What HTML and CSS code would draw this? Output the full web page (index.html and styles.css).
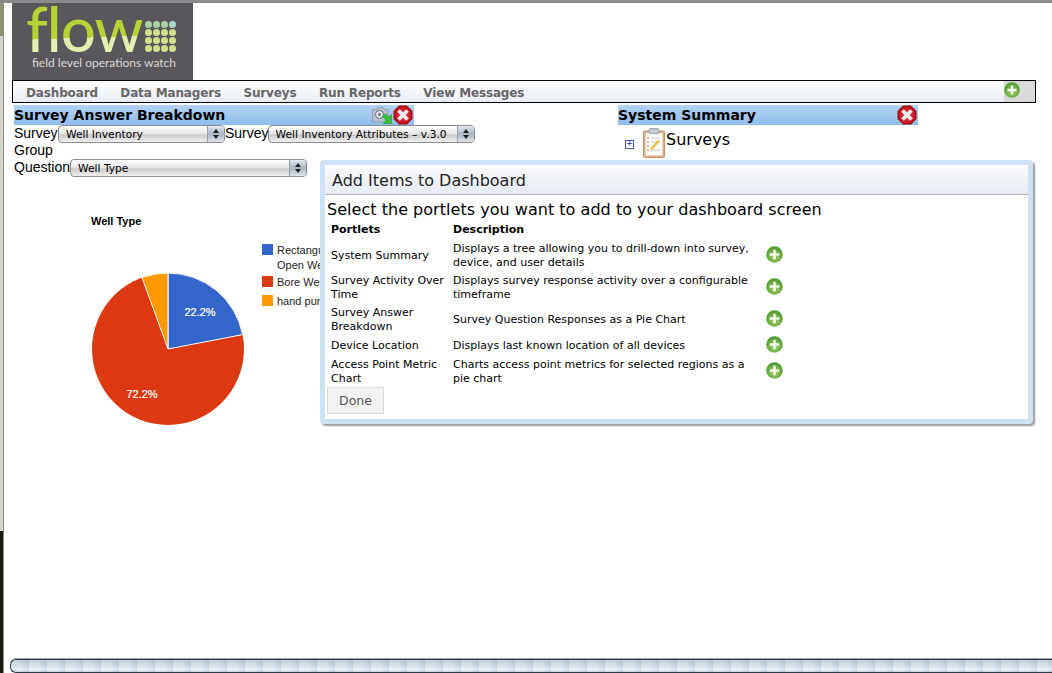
FILE: index.html
```html
<!DOCTYPE html>
<html lang="en">
<head>
    <meta charset="UTF-8">
    <title>FLOW Dashboard</title>
    <link rel="stylesheet" href="styles.css">
</head>
<body>

<svg class="iconDefs" width="0" height="0">
    <defs>
        <radialGradient id="greenBall" cx="50%" cy="62%" r="60%">
            <stop offset="0" stop-color="#a9d672"/>
            <stop offset="1" stop-color="#4b952a"/>
        </radialGradient>
        <radialGradient id="redBall" cx="50%" cy="50%" r="58%">
            <stop offset="0" stop-color="#ea4b50"/>
            <stop offset="0.7" stop-color="#c4151f"/>
            <stop offset="1" stop-color="#7c070d"/>
        </radialGradient>
        <symbol id="addIcon" viewBox="0 0 16 16">
            <circle cx="8" cy="8" r="7.8" fill="url(#greenBall)"/>
            <path d="M8 3.500v9M3.500 8h9" stroke="#f4f8ee" stroke-width="2.400"/>
        </symbol>
        <symbol id="closeIcon" viewBox="0 0 20 20">
            <path d="M6 0.500h8l5.500 5.500v8L14 19.500H6L0.500 14V6z" fill="url(#redBall)"/>
            <path d="M5.500 5.500l9 9M14.500 5.500l-9 9" stroke="#f6f0f0" stroke-width="3.800"/>
        </symbol>
    </defs>
</svg>

<div class="page">
    <div class="logo">
        <div class="logoMark">
            <span class="logoWord">flow</span>
            <div class="logoDots">
                <i class="top"></i><i class="top"></i><i class="top"></i><i class="teal"></i>
                <i></i><i></i><i></i><i></i>
                <i></i><i></i><i></i><i></i>
                <i></i><i></i><i></i><i></i>
            </div>
        </div>
        <div class="logoTag">field level operations watch</div>
    </div>

    <div class="menu">
        <div class="menuItems">
            <span>Dashboard</span>
            <span>Data Managers</span>
            <span>Surveys</span>
            <span>Run Reports</span>
            <span>View Messages</span>
        </div>
        <div class="menuAdd"><svg class="addSmall"><use href="#addIcon"/></svg></div>
    </div>

    <div class="portlets">
        <section class="portlet breakdown">
            <div class="portletHead">
                <span>Survey Answer Breakdown</span>
                <svg class="exportIcon" viewBox="0 0 20 18">
                    <path d="M0.500 3.500h4l1-2h6l1 2h3.500v12.500H0.500z" fill="#b6c2d3" stroke="#8b95a3" stroke-width="0.800"/>
                    <circle cx="7.500" cy="8.500" r="4" fill="#eef1f5" stroke="#59626d"/>
                    <circle cx="7.500" cy="8.500" r="1.700" fill="#7f8a9a"/>
                    <path d="M19.500 17.500v-9l-2.600 2.600-3.400-3.400-3 3 3.400 3.400-2.600 3.400z" fill="#35c035" stroke="#1f8a24" stroke-width="0.500"/>
                </svg>
                <svg class="closeBtn"><use href="#closeIcon"/></svg>
            </div>
            <div class="filters">
                <label class="groupLabel">Survey Group</label>
                <div class="fakeSelect surveyGroup"><span>Well Inventory</span><b></b></div>
                <label>Survey</label>
                <div class="fakeSelect surveyPick"><span>Well Inventory Attributes – v.3.0</span><b></b></div>
            </div>
            <div class="filters">
                <label>Question</label>
                <div class="fakeSelect questionPick"><span>Well Type</span><b></b></div>
            </div>
            <div class="chart">
                <div class="chartTitle">Well Type</div>
                <div class="chartBody">
                    <svg class="pie" width="154" height="154" viewBox="-77 -77 154 154">
                        <circle r="76" fill="#dc3912"/>
                        <path d="M0 0V-76A76 76 0 0 1 74.600 -14.400Z" fill="#3366cc" stroke="#fff"/>
                        <path d="M0 0L-26 -71.400A76 76 0 0 1 0 -76Z" fill="#ff9900" stroke="#fff"/>
                        <text x="32" y="-33" class="pieLabel" text-anchor="middle">22.2%</text>
                        <text x="-26" y="49" class="pieLabel" text-anchor="middle">72.2%</text>
                    </svg>
                    <ul class="legend">
                        <li><i class="blue"></i><span>Rectangular<br>Open Well</span></li>
                        <li><i class="red"></i><span>Bore Well</span></li>
                        <li><i class="orange"></i><span>hand pump</span></li>
                    </ul>
                </div>
            </div>
        </section>

        <section class="portlet summary">
            <div class="portletHead">
                <span>System Summary</span>
                <svg class="closeBtn"><use href="#closeIcon"/></svg>
            </div>
            <div class="treeRow">
                <span class="treeToggle">+</span>
                <svg class="clipboard" viewBox="0 0 22 30">
                    <rect x="0.500" y="3" width="21" height="26.500" rx="1" fill="#dfae86" stroke="#c39670"/>
                    <rect x="2.500" y="5" width="17" height="22.500" fill="#fafaf6"/>
                    <rect x="6" y="0.500" width="10" height="5" rx="1" fill="#c4c9cf" stroke="#8f959c" stroke-width="0.700"/>
                    <path d="M4 10h2M4 14h2M4 18h2M4 22h2" stroke="#e0685e" stroke-width="1.200"/>
                    <path d="M8 10h9M8 14h9M8 22h9" stroke="#cdd1d6"/>
                    <path d="M7 21l8-9 1.500 1.500-8 9z" fill="#eab92d"/>
                </svg>
                <span class="treeLabel">Surveys</span>
            </div>
        </section>
    </div>

    <div class="dialog">
        <div class="dialogHead">Add Items to Dashboard</div>
        <div class="dialogBody">
            <div class="dialogLead">Select the portlets you want to add to your dashboard screen</div>
            <table class="portletTable">
                <tr><th>Portlets</th><th>Description</th><th></th></tr>
                <tr>
                    <td class="nameCol">System Summary</td>
                    <td class="descCol">Displays a tree allowing you to drill-down into survey, device, and user details</td>
                    <td class="addCol"><svg class="addBig"><use href="#addIcon"/></svg></td>
                </tr>
                <tr>
                    <td class="nameCol">Survey Activity Over Time</td>
                    <td class="descCol">Displays survey response activity over a configurable timeframe</td>
                    <td class="addCol"><svg class="addBig"><use href="#addIcon"/></svg></td>
                </tr>
                <tr>
                    <td class="nameCol">Survey Answer Breakdown</td>
                    <td class="descCol">Survey Question Responses as a Pie Chart</td>
                    <td class="addCol"><svg class="addBig"><use href="#addIcon"/></svg></td>
                </tr>
                <tr>
                    <td class="nameCol">Device Location</td>
                    <td class="descCol">Displays last known location of all devices</td>
                    <td class="addCol"><svg class="addBig"><use href="#addIcon"/></svg></td>
                </tr>
                <tr>
                    <td class="nameCol">Access Point Metric Chart</td>
                    <td class="descCol">Charts access point metrics for selected regions as a pie chart</td>
                    <td class="addCol"><svg class="addBig"><use href="#addIcon"/></svg></td>
                </tr>
            </table>
            <button class="doneBtn">Done</button>
        </div>
    </div>

    <div class="hScroll"></div>
</div>

</body>
</html>
```

FILE: styles.css
```css
html, body {
    margin: 0;
    padding: 0;
    height: 100%;
    overflow: hidden;
    background-color: #fff;
    color: #000;
    font-family: "DejaVu Sans", Verdana, sans-serif;
}

.iconDefs {
    position: absolute;
}

/* Page frame, window chrome shows on top and left */
.page {
    position: relative;
    box-sizing: border-box;
    height: 673px;
    padding: 0 16px 0 12px;
    border-top: 3px solid #8b8b8b;
    display: flex;
    flex-direction: column;
}

.page::before {
    content: "";
    position: absolute;
    left: 0;
    top: 0;
    bottom: 0;
    width: 3px;
    border-right: 1px solid #8d8d86;
    background: linear-gradient(180deg, #8f9270 0 33px, #d5d5cb 33px 528px, #141c12 528px);
}

/* Logo */
.logo {
    width: 181px;
    height: 77px;
    box-sizing: border-box;
    padding-left: 14px;
    background-color: #59575c;
    flex: none;
}

.logoMark {
    display: flex;
    align-items: flex-end;
    height: 50px;
}

.logoWord {
    font-family: "Lato", sans-serif;
    font-size: 62px;
    font-weight: 500;
    line-height: 50px;
    letter-spacing: -1px;
    background: linear-gradient(178deg, #b5d334 0 68%, #e3efae 68%);
    -webkit-background-clip: text;
    background-clip: text;
    color: transparent;
}

.logoDots {
    display: grid;
    grid-template-columns: repeat(4, 7px);
    gap: 1px;
    margin: 0 0 1px 3px;
}

.logoDots i {
    width: 7px;
    height: 7px;
    border-radius: 50%;
    background-color: #cfe08d;
}

.logoDots i.top {
    background-color: #a9cfa5;
}

.logoDots i.teal {
    background-color: #a6dcc8;
}

.logoTag {
    margin: 2px 0 0 6px;
    font-family: "Lato", sans-serif;
    font-size: 12px;
    color: #d9d9d5;
    white-space: nowrap;
}

/* Menu bar */
.menu {
    flex: none;
    width: 1024px;
    height: 23px;
    box-sizing: border-box;
    border: 1px solid #000;
    display: flex;
    justify-content: space-between;
    background: linear-gradient(180deg, #fff, #e9edf6);
}

.menuItems {
    display: flex;
    gap: 22.5px;
    padding: 5px 0 0 13px;
    font-size: 12px;
    line-height: 15px;
    letter-spacing: -0.15px;
    font-weight: bold;
    color: #666;
}

.menuAdd {
    width: 31px;
    background-color: #d9d9d9;
}

.addSmall {
    display: block;
    width: 16px;
    height: 16px;
    margin-top: 1px;
}

/* Portlets */
.portlets {
    flex: none;
    display: flex;
    padding: 2px 0 0 2px;
}

.portlet.breakdown {
    width: 604px;
}

.portlet.summary {
    width: 300px;
}

.portletHead {
    height: 20px;
    display: flex;
    align-items: center;
    font-size: 14px;
    font-weight: bold;
    background: linear-gradient(180deg, #b4d3f3, #8fbdec);
}

.breakdown .portletHead {
    width: 400px;
}

.portletHead span {
    flex: 1;
}

.closeBtn {
    width: 20px;
    height: 20px;
    margin-right: 1px;
    flex: none;
}

.exportIcon {
    width: 20px;
    height: 18px;
    margin-right: 1px;
    flex: none;
}

.filters {
    display: flex;
    align-items: flex-start;
    font-family: "Liberation Sans", Arial, sans-serif;
    font-size: 14px;
    line-height: 17px;
}

.groupLabel {
    width: 44px;
}

.fakeSelect {
    box-sizing: border-box;
    position: relative;
    height: 18px;
    padding: 1px 0 0 7px;
    border: 1px solid #8d8d8d;
    border-radius: 4px;
    font-family: "DejaVu Sans", Verdana, sans-serif;
    font-size: 10.7px;
    line-height: 16px;
    background: linear-gradient(180deg, #fff, #e4e4e4 50%, #c9c9c9 55%, #f0f0f0);
}

.fakeSelect b {
    position: absolute;
    top: 0;
    right: 0;
    bottom: 0;
    width: 16px;
    border-left: 1px solid #9aa0a8;
    border-radius: 0 3px 3px 0;
    background: linear-gradient(180deg, #e4e9ef, #a9b5c3 50%, #dfe5ea);
}

.fakeSelect b::before,
.fakeSelect b::after {
    content: "";
    position: absolute;
    left: 5px;
    border-left: 3px solid transparent;
    border-right: 3px solid transparent;
}

.fakeSelect b::before {
    top: 3px;
    border-bottom: 4px solid #222;
}

.fakeSelect b::after {
    bottom: 3px;
    border-top: 4px solid #222;
}

.surveyGroup {
    width: 167px;
}

.surveyPick {
    width: 207px;
    margin-left: -1px;
}

.questionPick {
    width: 237px;
}

/* Chart */
.chart {
    height: 272px;
    font-family: "Liberation Sans", Arial, sans-serif;
}

.chartTitle {
    padding: 38px 0 0 77px;
    font-size: 11px;
    font-weight: bold;
    line-height: 13px;
}

.chartBody {
    display: flex;
    align-items: flex-start;
    padding: 8px 0 0 77px;
}

.pie {
    margin-top: 36px;
    flex: none;
}

.pieLabel {
    font-family: "Liberation Sans", Arial, sans-serif;
    font-size: 11px;
    stroke: #fff;
    stroke-width: 0.2px;
    fill: #fff;
}

.legend {
    list-style: none;
    margin: 7px 0 0 17px;
    padding: 0;
    font-size: 11px;
    line-height: 15px;
    color: #222;
    white-space: nowrap;
}

.legend li {
    display: flex;
    gap: 4px;
    margin-bottom: 4px;
}

.legend li:first-child {
    margin-bottom: 2px;
}

.legend i {
    width: 11px;
    height: 11px;
    margin-top: 1px;
    flex: none;
}

.legend i.blue { background-color: #3366cc; }
.legend i.red { background-color: #dc3912; }
.legend i.orange { background-color: #ff9900; }

/* System summary tree */
.summary .portletHead {
    width: 300px;
}

.treeRow {
    display: flex;
    align-items: flex-start;
    padding: 3px 0 0 7px;
    height: 34px;
}

.treeToggle {
    box-sizing: border-box;
    width: 9px;
    height: 9px;
    margin: 12px 9px 0 0;
    border: 1px solid #4a50b0;
    font-size: 8px;
    line-height: 6px;
    text-align: center;
    color: #2a2f90;
}

.clipboard {
    width: 22px;
    height: 30px;
}

.treeLabel {
    margin: 2px 0 0 1px;
    font-size: 16px;
    line-height: 20px;
}

/* Add items dialog, floats over the dashboard */
.dialog {
    position: absolute;
    left: 320px;
    top: 157px;
    width: 713px;
    height: 264px;
    box-sizing: border-box;
    border: 5px solid #cfe2f5;
    border-radius: 4px;
    background-color: #fff;
    box-shadow: 2px 2px 2px #9a9a9a;
}

.dialogHead {
    height: 30px;
    box-sizing: border-box;
    padding: 6px 0 0 7px;
    border-bottom: 1px solid #b5b5b5;
    font-size: 16px;
    line-height: 20px;
    color: #222;
    background: linear-gradient(180deg, #fafbfd, #e6ebf3);
}

.dialogBody {
    padding: 5px 0 0 2px;
}

.dialogLead {
    font-size: 16px;
    line-height: 20px;
    letter-spacing: 0.03px;
}

.portletTable {
    margin: 3px 0 0 2px;
    border-collapse: separate;
    border-spacing: 0;
    font-size: 11px;
    line-height: 14px;
}

.portletTable th {
    padding: 0 2px 3px 2px;
    text-align: left;
    font-weight: bold;
}

.portletTable td {
    padding: 2px;
    vertical-align: middle;
}

.nameCol {
    width: 118px;
}

.descCol {
    width: 305px;
}

.addCol {
    width: 20px;
}

.addBig {
    display: block;
    width: 17px;
    height: 17px;
    margin: -2px 0 1px 4px;
}

.doneBtn {
    display: block;
    width: 57px;
    height: 27px;
    margin-top: -1px;
    padding: 0;
    border: 1px solid #dcdcdc;
    background-color: #f3f3f3;
    color: #555;
    font-family: "DejaVu Sans", Verdana, sans-serif;
    font-size: 12.5px;
}

/* Horizontal scrollbar at the bottom of the window */
.hScroll {
    position: absolute;
    left: 10px;
    right: 0;
    top: 656px;
    height: 12px;
    border: 1px solid #2e3a4a;
    border-right: 0;
    border-radius: 6px 0 0 6px;
    box-shadow: 0 -1px 0 #a5a5a5;
    background:
        repeating-linear-gradient(90deg, rgba(255, 255, 255, 0.18) 0 9px, rgba(60, 80, 110, 0.08) 18px),
        linear-gradient(180deg, #b7c4d2, #d0dce6 50%, #e6f0f7 80%, #b9c6d3);
}
```
